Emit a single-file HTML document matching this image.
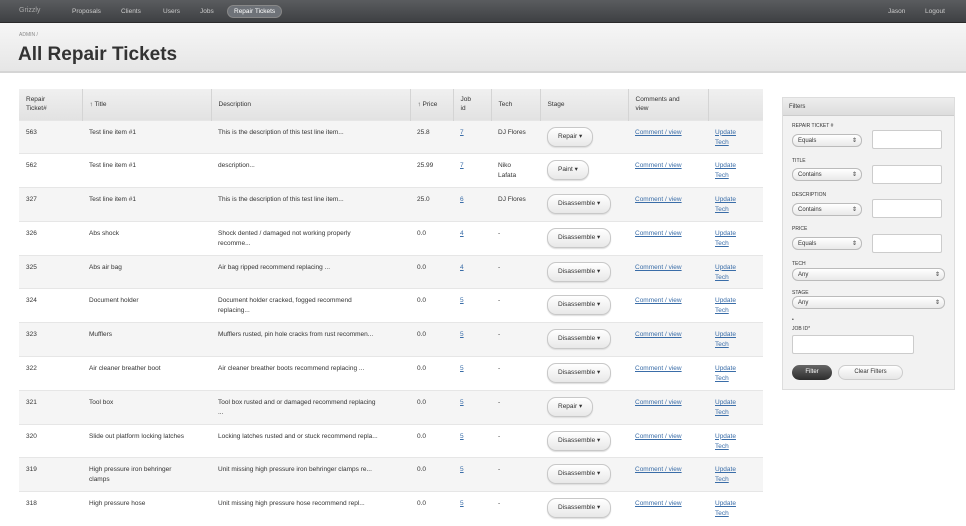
<!DOCTYPE html>
<html><head><style>
*{box-sizing:border-box;margin:0;padding:0}
body{width:966px;height:504px;overflow:hidden;background:#fff;font-family:"Liberation Sans",sans-serif;font-size:6.5px;color:#333;position:relative}
.nav{position:absolute;left:0;top:0;width:966px;height:23px;background:linear-gradient(#5a5c5f,#3e4043);border-bottom:1px solid #2a2a2a}
.nav span{position:absolute;top:8px;color:#ccc;font-size:6.5px}
.nav .act{top:5px;background:#6e7278;border:1px solid #888;border-radius:8px;padding:2px 6px;color:#fff}
.hdr{position:absolute;left:0;top:23px;width:966px;height:50px;background:linear-gradient(#f6f6f6,#e6e6e6);border-bottom:2px solid #d5d5d5}
.hdr .bc{position:absolute;left:19px;top:9px;font-size:5px;color:#888}
.hdr h1{position:absolute;left:18px;top:21px;font-size:19px;font-weight:bold;color:#333}
table{position:absolute;left:19px;top:89px;border-collapse:collapse;width:744px}
th{background:linear-gradient(#f0f0f0,#e2e2e2);height:31px;text-align:left;vertical-align:middle;font-weight:normal;padding:0 7px;border-left:1px solid #d4d4d4;font-size:6.5px;color:#333;line-height:9px}
th:first-child{border-left:none}
td{height:33.8px;padding:7px 7px 0;vertical-align:top;line-height:10px;border-top:1px solid #e6e6e6}
tr:nth-child(even) td{background:#f5f5f5}
a{color:#3a6da8;text-decoration:underline}
.btn{display:inline-block;border:1px solid #c8c8c8;border-radius:9px;background:linear-gradient(#fff,#e8e8e8);padding:4px 10px;margin-top:-1px;box-shadow:0 1px 1px #ddd}
.f{position:absolute;left:782px;top:97px;width:173px;height:293px;background:#f2f2f2;border:1px solid #ddd}
.f .t{height:18px;background:linear-gradient(#eee,#ddd);border-bottom:1px solid #ccc;padding:6px 6px;font-size:6px}
.lab{position:absolute;left:9px;font-size:5px;color:#333}
.sel{position:absolute;left:9px;width:70px;height:13px;border:1px solid #bbb;border-radius:6px;background:linear-gradient(#fff,#e9e9e9);font-size:6px;padding:3px 5px}
.sel:after{content:"⇕";position:absolute;right:4px;top:2px;font-size:6px}
.inp{position:absolute;left:89px;width:70px;height:19px;border:1px solid #ccc;background:#fff;border-radius:2px}
</style></head><body>
<div class="nav">
<span style="left:19px;color:#aaa;top:7px;font-size:7px">Grizzly</span>
<span style="left:72px">Proposals</span><span style="left:121px">Clients</span><span style="left:163px">Users</span><span style="left:200px">Jobs</span>
<span class="act" style="left:227px">Repair Tickets</span>
<span style="left:888px">Jason</span><span style="left:925px">Logout</span>
</div>
<div class="hdr"><div class="bc">ADMIN /</div><h1>All Repair Tickets</h1></div>
<table>
<colgroup><col style="width:63px"><col style="width:129px"><col style="width:199px"><col style="width:43px"><col style="width:38px"><col style="width:49px"><col style="width:88px"><col style="width:80px"><col style="width:55px"></colgroup>
<tr><th>Repair<br>Ticket#</th><th>↑ Title</th><th>Description</th><th>↑ Price</th><th>Job<br>id</th><th>Tech</th><th>Stage</th><th>Comments and<br>view</th><th></th></tr>
<tr><td>563</td><td>Test line item #1</td><td>This is the description of this test line item...</td><td>25.8</td><td><a>7</a></td><td>DJ Flores</td><td><span class="btn">Repair ▾</span></td><td><a>Comment / view</a></td><td><a>Update<br>Tech</a></td></tr>
<tr><td>562</td><td>Test line item #1</td><td>description...</td><td>25.99</td><td><a>7</a></td><td>Niko<br>Lafata</td><td><span class="btn">Paint ▾</span></td><td><a>Comment / view</a></td><td><a>Update<br>Tech</a></td></tr>
<tr><td>327</td><td>Test line item #1</td><td>This is the description of this test line item...</td><td>25.0</td><td><a>6</a></td><td>DJ Flores</td><td><span class="btn">Disassemble ▾</span></td><td><a>Comment / view</a></td><td><a>Update<br>Tech</a></td></tr>
<tr><td>326</td><td>Abs shock</td><td>Shock dented / damaged not working properly<br>recomme...</td><td>0.0</td><td><a>4</a></td><td>-</td><td><span class="btn">Disassemble ▾</span></td><td><a>Comment / view</a></td><td><a>Update<br>Tech</a></td></tr>
<tr><td>325</td><td>Abs air bag</td><td>Air bag ripped recommend replacing ...</td><td>0.0</td><td><a>4</a></td><td>-</td><td><span class="btn">Disassemble ▾</span></td><td><a>Comment / view</a></td><td><a>Update<br>Tech</a></td></tr>
<tr><td>324</td><td>Document holder</td><td>Document holder cracked, fogged recommend<br>replacing...</td><td>0.0</td><td><a>5</a></td><td>-</td><td><span class="btn">Disassemble ▾</span></td><td><a>Comment / view</a></td><td><a>Update<br>Tech</a></td></tr>
<tr><td>323</td><td>Mufflers</td><td>Mufflers rusted, pin hole cracks from rust recommen...</td><td>0.0</td><td><a>5</a></td><td>-</td><td><span class="btn">Disassemble ▾</span></td><td><a>Comment / view</a></td><td><a>Update<br>Tech</a></td></tr>
<tr><td>322</td><td>Air cleaner breather boot</td><td>Air cleaner breather boots recommend replacing ...</td><td>0.0</td><td><a>5</a></td><td>-</td><td><span class="btn">Disassemble ▾</span></td><td><a>Comment / view</a></td><td><a>Update<br>Tech</a></td></tr>
<tr><td>321</td><td>Tool box</td><td>Tool box rusted and or damaged recommend replacing<br>...</td><td>0.0</td><td><a>5</a></td><td>-</td><td><span class="btn">Repair ▾</span></td><td><a>Comment / view</a></td><td><a>Update<br>Tech</a></td></tr>
<tr><td>320</td><td>Slide out platform locking latches</td><td>Locking latches rusted and or stuck recommend repla...</td><td>0.0</td><td><a>5</a></td><td>-</td><td><span class="btn">Disassemble ▾</span></td><td><a>Comment / view</a></td><td><a>Update<br>Tech</a></td></tr>
<tr><td>319</td><td>High pressure iron behringer<br>clamps</td><td>Unit missing high pressure iron behringer clamps re...</td><td>0.0</td><td><a>5</a></td><td>-</td><td><span class="btn">Disassemble ▾</span></td><td><a>Comment / view</a></td><td><a>Update<br>Tech</a></td></tr>
<tr><td>318</td><td>High pressure hose</td><td>Unit missing high pressure hose recommend repl...</td><td>0.0</td><td><a>5</a></td><td>-</td><td><span class="btn">Disassemble ▾</span></td><td><a>Comment / view</a></td><td><a>Update<br>Tech</a></td></tr>
</table>
<div class="f"><div class="t">Filters</div>
<div class="lab" style="top:25px">REPAIR TICKET #</div><div class="sel" style="top:36px">Equals</div><div class="inp" style="top:32px"></div>
<div class="lab" style="top:60px">TITLE</div><div class="sel" style="top:70px">Contains</div><div class="inp" style="top:67px"></div>
<div class="lab" style="top:94px">DESCRIPTION</div><div class="sel" style="top:105px">Contains</div><div class="inp" style="top:101px"></div>
<div class="lab" style="top:128px">PRICE</div><div class="sel" style="top:139px">Equals</div><div class="inp" style="top:136px"></div>
<div class="lab" style="top:163px">TECH</div><div class="sel" style="top:170px;width:153px">Any</div>
<div class="lab" style="top:192px">STAGE</div><div class="sel" style="top:198px;width:153px">Any</div>
<div class="lab" style="top:219px">•</div><div class="lab" style="top:228px">JOB ID*</div>
<div class="inp" style="top:237px;left:9px;width:122px"></div>
<div style="position:absolute;left:9px;top:267px;width:40px;height:15px;border-radius:8px;background:linear-gradient(#666,#2c2c2c);color:#fff;font-size:6px;text-align:center;line-height:15px">Filter</div>
<div style="position:absolute;left:55px;top:267px;width:65px;height:15px;border-radius:8px;border:1px solid #ccc;background:linear-gradient(#fff,#e6e6e6);font-size:6px;text-align:center;line-height:13px">Clear Filters</div>
</div>
</body></html>
